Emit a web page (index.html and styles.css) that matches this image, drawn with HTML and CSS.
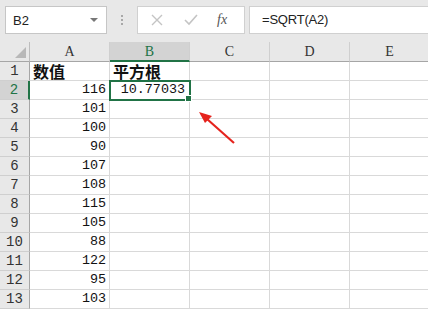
FILE: index.html
```html
<!DOCTYPE html>
<html lang="zh">
<head>
<meta charset="UTF-8" />
<title>SQRT</title>
<link rel="stylesheet" href="styles.css">
</head>
<body>
<div class="page">
  <div class="toolbar">
    <div class="namebox"><span>B2</span><span class="caret"></span></div>
    <div class="grip"><i></i><i></i><i></i></div>
    <div class="fxbox">
      <svg class="icon" width="12" height="12" viewBox="0 0 12 12"><path d="M1 1 L11 11 M11 1 L1 11" stroke="#c4c4c4" stroke-width="1.4" fill="none"/></svg>
      <svg class="icon" width="14" height="12" viewBox="0 0 14 12"><path d="M1 6 L5 10 L13 1" stroke="#c4c4c4" stroke-width="1.6" fill="none"/></svg>
      <span class="fx">fx</span>
    </div>
    <div class="formula">=SQRT(A2)</div>
  </div>

  <div class="sheet">
    <div class="corner"><span class="tri"></span></div>
    <div class="colhead">A</div>
    <div class="colhead active">B</div>
    <div class="colhead">C</div>
    <div class="colhead">D</div>
    <div class="colhead">E</div>

    <div class="rowhead">1</div>
    <div class="cell title">数值</div>
    <div class="cell title">平方根</div>
    <div class="cell"></div><div class="cell"></div><div class="cell"></div>

    <div class="rowhead active">2</div>
    <div class="cell num">116</div>
    <div class="cell num selected">10.77033</div>
    <div class="cell"></div><div class="cell"></div><div class="cell"></div>

    <div class="rowhead">3</div>
    <div class="cell num">101</div>
    <div class="cell"></div><div class="cell"></div><div class="cell"></div><div class="cell"></div>

    <div class="rowhead">4</div>
    <div class="cell num">100</div>
    <div class="cell"></div><div class="cell"></div><div class="cell"></div><div class="cell"></div>

    <div class="rowhead">5</div>
    <div class="cell num">90</div>
    <div class="cell"></div><div class="cell"></div><div class="cell"></div><div class="cell"></div>

    <div class="rowhead">6</div>
    <div class="cell num">107</div>
    <div class="cell"></div><div class="cell"></div><div class="cell"></div><div class="cell"></div>

    <div class="rowhead">7</div>
    <div class="cell num">108</div>
    <div class="cell"></div><div class="cell"></div><div class="cell"></div><div class="cell"></div>

    <div class="rowhead">8</div>
    <div class="cell num">115</div>
    <div class="cell"></div><div class="cell"></div><div class="cell"></div><div class="cell"></div>

    <div class="rowhead">9</div>
    <div class="cell num">105</div>
    <div class="cell"></div><div class="cell"></div><div class="cell"></div><div class="cell"></div>

    <div class="rowhead">10</div>
    <div class="cell num">88</div>
    <div class="cell"></div><div class="cell"></div><div class="cell"></div><div class="cell"></div>

    <div class="rowhead">11</div>
    <div class="cell num">122</div>
    <div class="cell"></div><div class="cell"></div><div class="cell"></div><div class="cell"></div>

    <div class="rowhead">12</div>
    <div class="cell num">95</div>
    <div class="cell"></div><div class="cell"></div><div class="cell"></div><div class="cell"></div>

    <div class="rowhead">13</div>
    <div class="cell num">103</div>
    <div class="cell"></div><div class="cell"></div><div class="cell"></div><div class="cell"></div>
  </div>

  <!-- red pointer to B2 -->
  <svg class="arrow" width="428" height="309" viewBox="0 0 428 309">
    <line x1="234" y1="143" x2="207" y2="119" stroke="#e5231d" stroke-width="2.2"/>
    <polygon points="199,112 212,116 205,123" fill="#e5231d"/>
  </svg>
</div>
</body>
</html>
```

FILE: styles.css
```css
* {
margin: 0;
padding: 0;
box-sizing: border-box;
}

body {
background: #fff;
font-family: "Liberation Sans", sans-serif;
}

.page {
position: relative;
width: 428px;
height: 309px;
overflow: hidden;
}

/* formula bar */
.toolbar {
height: 42px;
background: #e8e8e8;
display: flex;
align-items: flex-start;
padding-top: 6px;
padding-left: 5px;
}

.namebox {
width: 102px;
height: 28px;
background: #fff;
border: 1px solid #c6c6c6;
display: flex;
align-items: center;
justify-content: space-between;
padding: 0 8px 0 7px;
font-size: 13px;
color: #222;
}

.caret {
width: 0;
height: 0;
border-left: 4px solid transparent;
border-right: 4px solid transparent;
border-top: 4px solid #777;
}

.grip {
width: 30px;
height: 28px;
display: flex;
flex-direction: column;
align-items: center;
justify-content: center;
gap: 2px;
}

.grip i {
width: 2px;
height: 2px;
background: #a8a8a8;
}

.fxbox {
width: 108px;
height: 28px;
background: #fff;
border: 1px solid #d0d0d0;
display: flex;
align-items: center;
padding-left: 13px;
gap: 21px;
}

.fx {
font-family: "Liberation Serif", serif;
font-style: italic;
font-size: 14px;
color: #555;
margin-left: -2px;
}

.formula {
flex: 1;
height: 28px;
margin-left: 4px;
background: #fff;
border: 1px solid #d0d0d0;
border-right: 0;
font-size: 13px;
letter-spacing: -0.2px;
color: #222;
padding: 5px 0 0 12px;
}

/* sheet */
.sheet {
display: grid;
grid-template-columns: 30px repeat(5, 80px);
grid-template-rows: 20px;
grid-auto-rows: 19px;
}

.corner {
background: #e8e8e8;
border-right: 1px solid #bdbdbd;
border-bottom: 1px solid #a6a6a6;
position: relative;
}

.tri {
position: absolute;
right: 3px;
bottom: 3px;
width: 0;
height: 0;
border-left: 11px solid transparent;
border-bottom: 11px solid #b8b8b8;
}

.colhead {
background: #e8e8e8;
border-right: 1px solid #cfcfcf;
border-bottom: 1px solid #a6a6a6;
font-family: "Liberation Serif", serif;
font-size: 14px;
color: #333;
text-align: center;
line-height: 20px;
}

.colhead.active {
background: #d3d3d3;
color: #217346;
border-bottom: 2px solid #217346;
line-height: 19px;
}

.rowhead {
background: #e8e8e8;
border-right: 1px solid #a6a6a6;
border-bottom: 1px solid #cfcfcf;
font-family: "Liberation Mono", monospace;
font-size: 14px;
color: #333;
text-align: center;
line-height: 19px;
}

.rowhead.active {
background: #d3d3d3;
color: #217346;
border-right: 2px solid #217346;
}

.cell {
border-right: 1px solid #d9d9d9;
border-bottom: 1px solid #d9d9d9;
display: flex;
align-items: flex-end;
padding: 0 3px 1px 3px;
font-size: 13.4px;
color: #111;
}

.cell.num {
justify-content: flex-end;
font-family: "Liberation Mono", monospace;
line-height: 16px;
}

.cell.title {
font-family: "Noto Sans CJK SC", sans-serif;
font-weight: bold;
font-size: 16px;
line-height: 18px;
padding-bottom: 0;
}

.cell.selected {
position: relative;
outline: 2px solid #217346;
outline-offset: -1px;
padding-right: 4px;
}

.cell.selected::after {
content: "";
position: absolute;
right: -3px;
bottom: -3px;
width: 5px;
height: 5px;
background: #217346;
border: 1px solid #fff;
}

.arrow {
position: absolute;
left: 0;
top: 0;
pointer-events: none;
}
```
